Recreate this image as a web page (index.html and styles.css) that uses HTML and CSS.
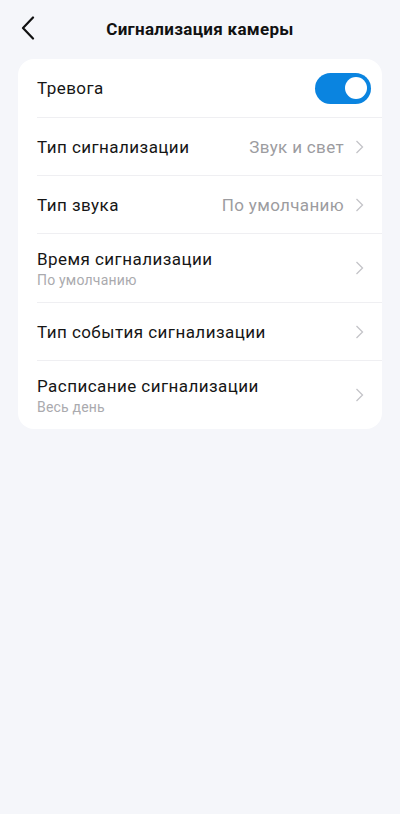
FILE: index.html
```html
<!DOCTYPE html>
<html lang="ru">

<head>
    <meta charset="UTF-8">
    <title>Сигнализация камеры</title>
    <link rel="stylesheet" href="styles.css">
</head>

<body>

    <header class="topbar">
        <button class="back" type="button" aria-label="Назад">
            <svg width="14" height="24" viewBox="0 0 14 24">
                <path d="M12 1.5 L2 12 L12 22.5" fill="none" stroke="#111" stroke-width="2.2" stroke-linecap="round" stroke-linejoin="round"/>
            </svg>
        </button>
        <h1>Сигнализация камеры</h1>
    </header>

    <section class="card">
        <div class="row">
            <div class="row-inner">
                <div class="label">Тревога</div>
                <span class="toggle on"><span class="knob"></span></span>
            </div>
        </div>

        <div class="row">
            <div class="row-inner line">
                <div class="label">Тип сигнализации</div>
                <span class="value">Звук и свет</span>
                <svg class="chev" width="9" height="14" viewBox="0 0 9 14"><path d="M1.5 1 L7.5 7 L1.5 13" fill="none" stroke="#c4c4c8" stroke-width="1.3"/></svg>
            </div>
        </div>

        <div class="row">
            <div class="row-inner line">
                <div class="label">Тип звука</div>
                <span class="value">По умолчанию</span>
                <svg class="chev" width="9" height="14" viewBox="0 0 9 14"><path d="M1.5 1 L7.5 7 L1.5 13" fill="none" stroke="#c4c4c8" stroke-width="1.3"/></svg>
            </div>
        </div>

        <div class="row tall">
            <div class="row-inner line">
                <div class="label">Время сигнализации
                    <small>По умолчанию</small>
                </div>
                <svg class="chev" width="9" height="14" viewBox="0 0 9 14"><path d="M1.5 1 L7.5 7 L1.5 13" fill="none" stroke="#c4c4c8" stroke-width="1.3"/></svg>
            </div>
        </div>

        <div class="row">
            <div class="row-inner line">
                <div class="label">Тип события сигнализации</div>
                <svg class="chev" width="9" height="14" viewBox="0 0 9 14"><path d="M1.5 1 L7.5 7 L1.5 13" fill="none" stroke="#c4c4c8" stroke-width="1.3"/></svg>
            </div>
        </div>

        <div class="row tall">
            <div class="row-inner line">
                <div class="label">Расписание сигнализации
                    <small>Весь день</small>
                </div>
                <svg class="chev" width="9" height="14" viewBox="0 0 9 14"><path d="M1.5 1 L7.5 7 L1.5 13" fill="none" stroke="#c4c4c8" stroke-width="1.3"/></svg>
            </div>
        </div>
    </section>

</body>

</html>
```

FILE: styles.css
```css
body {
    font-family: Roboto, "Noto Sans", sans-serif;
    margin: 0;
    padding: 0;
    background-color: #f5f6fa;
    color: #111;
    min-height: 814px;
}

.topbar {
    position: relative;
    height: 59px;
    display: flex;
    align-items: center;
    justify-content: center;
}

.back {
    position: absolute;
    left: 21px;
    top: 16px;
    padding: 0;
    border: none;
    background: none;
    line-height: 0;
}

.topbar h1 {
    margin: 0 0 1px;
    font-size: 17px;
    font-weight: 700;
    letter-spacing: 0.3px;
    color: #111;
}

.card {
    margin: 0 18px;
    background-color: #fff;
    border-radius: 16px;
    overflow: hidden;
}

.row {
    padding-left: 19px;
}

.row-inner {
    display: flex;
    align-items: center;
    height: 58px;
    padding-right: 11px;
    box-sizing: border-box;
}

.row.tall .row-inner {
    height: 69px;
}

.line {
    border-top: 1px solid #efeff2;
}

.label {
    flex: 1;
    font-size: 17px;
    letter-spacing: 0.45px;
    color: #161616;
}

.label small {
    display: block;
    margin-top: 3px;
    font-size: 14px;
    letter-spacing: 0.2px;
    color: #aaaaae;
}

.value {
    font-size: 17px;
    letter-spacing: 0.35px;
    color: #9c9ca0;
    margin-right: 11px;
}

.chev {
    margin-right: 7px;
    flex: none;
}

.toggle {
    position: relative;
    width: 56px;
    height: 31px;
    border-radius: 16px;
    background-color: #c8c8cc;
}

.toggle.on {
    background-color: #0a84e0;
}

.knob {
    position: absolute;
    top: 4.5px;
    right: 4px;
    width: 22px;
    height: 22px;
    border-radius: 50%;
    background-color: #fff;
}
```
